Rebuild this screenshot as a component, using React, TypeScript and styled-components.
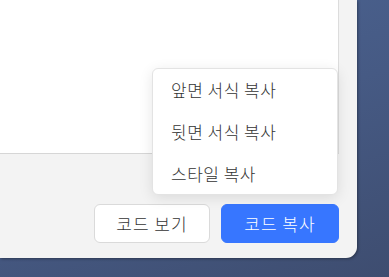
import React from "react";
import styled, { createGlobalStyle } from "styled-components";

const Global = createGlobalStyle`
  html, body { margin: 0; padding: 0; }
  body {
    width: 389px;
    height: 277px;
    overflow: hidden;
    font-family: "Noto Sans CJK KR", "Noto Sans", sans-serif;
  }
`;

const Desktop = styled.div`
  width: 389px;
  height: 277px;
  background: linear-gradient(160deg, #4c6594 0%, #465a84 50%, #3e4d70 100%);
`;

const Dialog = styled.div`
  width: 357px;
  height: 258px;
  background: #f3f3f3;
  border-bottom-right-radius: 11px;
  box-shadow: 1px 1px 3px rgba(0, 0, 0, 0.35);
  display: flex;
  flex-direction: column;
`;

const Content = styled.div`
  box-sizing: border-box;
  width: 339px;
  height: 154px;
  background: #ffffff;
  border-right: 1px solid #dcdcdc;
  border-bottom: 1px solid #d6d6d6;
`;

const Footer = styled.div`
  display: flex;
  justify-content: flex-end;
  gap: 11px;
  padding: 50px 18px 0 0;
`;

const Button = styled.button<{ $primary?: boolean }>`
  box-sizing: border-box;
  height: 39px;
  width: ${(p) => (p.$primary ? "118px" : "116px")};
  border-radius: 6px;
  border: 1px solid ${(p) => (p.$primary ? "#3776ff" : "#dadada")};
  background: ${(p) => (p.$primary ? "#3776ff" : "#ffffff")};
  color: ${(p) => (p.$primary ? "#ffffff" : "#333333")};
  font-family: inherit;
  font-size: 17px;
  font-weight: 300;
  letter-spacing: 1px;
  padding: 0;
  display: flex;
  align-items: center;
  justify-content: center;
`;

const SplitWrap = styled.div`
  position: relative;
`;

const Menu = styled.div`
  position: absolute;
  right: 1px;
  bottom: calc(100% + 9px);
  box-sizing: border-box;
  width: 186px;
  height: 127px;
  background: #ffffff;
  border: 1px solid #e3e3e3;
  border-radius: 6px;
  box-shadow: 0 3px 14px rgba(0, 0, 0, 0.1);
  display: flex;
  flex-direction: column;
`;

const MenuItem = styled.div`
  height: 42px;
  display: flex;
  align-items: center;
  padding-left: 18px;
  font-size: 17px;
  font-weight: 300;
  letter-spacing: 0.5px;
  color: #333333;
`;

export default function App() {
  return (
    <>
      <Global />
      <Desktop>
        <Dialog>
          <Content />
          <Footer>
            <Button>코드 보기</Button>
            <SplitWrap>
              <Menu>
                <MenuItem>앞면 서식 복사</MenuItem>
                <MenuItem>뒷면 서식 복사</MenuItem>
                <MenuItem>스타일 복사</MenuItem>
              </Menu>
              <Button $primary>코드 복사</Button>
            </SplitWrap>
          </Footer>
        </Dialog>
      </Desktop>
    </>
  );
}
